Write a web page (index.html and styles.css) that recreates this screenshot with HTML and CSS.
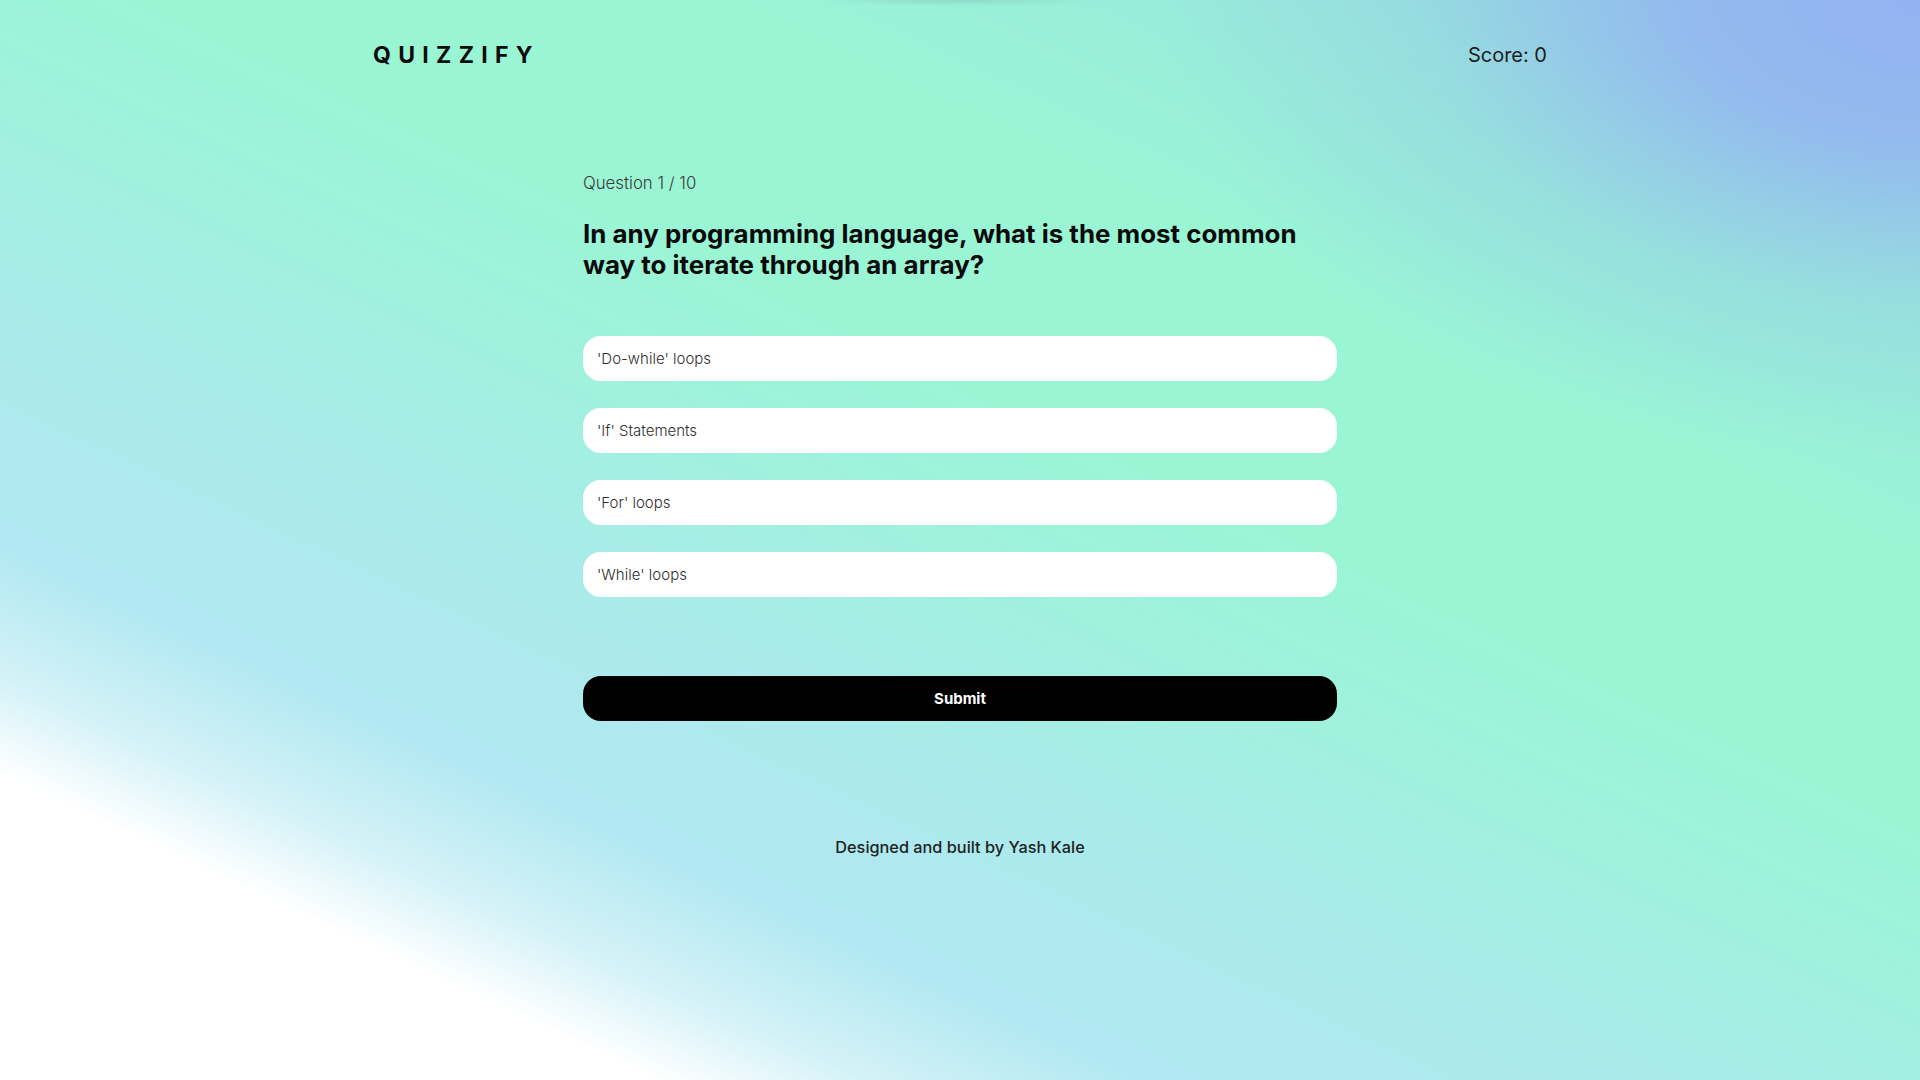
FILE: index.html
```html
<!DOCTYPE html>
<html lang="en">
<head>
<meta charset="utf-8">
<title>Quizzify</title>
<link rel="stylesheet" href="styles.css">
</head>
<body>
<div class="page">
  <header class="topbar">
    <div class="logo">QUIZZIFY</div>
    <div class="score">Score: 0</div>
  </header>
  <main class="quiz">
    <p class="counter">Question 1 / 10</p>
    <h1 class="question">In any programming language, what is the most common way to iterate through an array?</h1>
    <div class="options">
      <button class="option">'Do-while' loops</button>
      <button class="option">'If' Statements</button>
      <button class="option">'For' loops</button>
      <button class="option">'While' loops</button>
    </div>
    <button class="submit">Submit</button>
  </main>
  <footer class="credit">Designed and built by Yash Kale</footer>
</div>
</body>
</html>
```
FILE: styles.css
```css
* { box-sizing: border-box; }
html, body { margin: 0; padding: 0; }
body {
  min-height: 100vh;
  font-family: Inter, "Noto Sans", "Liberation Sans", sans-serif;
  color: #111;
  background:
    radial-gradient(ellipse 140px 6px at 49.8% 0, rgba(60,90,90,0.14), rgba(60,90,90,0) 100%),
    radial-gradient(ellipse 760px 460px at 100% 0, rgba(147,178,242,1) 0%, rgba(147,180,240,0.85) 30%, rgba(147,200,230,0.35) 65%, rgba(147,210,225,0) 100%),
    linear-gradient(25deg, #ffffff 0%, #ffffff 15.5%, #d3f2f7 20.5%, #b2e8f2 27%, #abeaec 37%, #a1f0df 48%, #9af5d5 58%, #9af5d5 72%, #98e8dc 86%, #93d0e6 100%);
  background-attachment: fixed;
}
.page {
  min-height: 100vh;
  display: flex;
  flex-direction: column;
}
.topbar {
  width: 1174px;
  margin: 0 auto;
  padding-top: 41px;
  display: flex;
  justify-content: space-between;
  align-items: center;
  height: 69px;
}
.logo {
  font-size: 23px;
  font-weight: 700;
  letter-spacing: 7.3px;
  line-height: 28px;
  color: #0b0b0b;
}
.score {
  font-size: 20px;
  font-weight: 400;
  line-height: 28px;
  color: #1d1d1d;
}
.quiz {
  width: 754px;
  margin: 104px auto 0;
  display: flex;
  flex-direction: column;
}
.counter {
  margin: 0;
  font-size: 16.8px;
  line-height: 20px;
  font-weight: 300;
  color: #3a3a3a;
}
.question {
  margin: 25px 0 0;
  font-size: 25.9px;
  line-height: 31px;
  font-weight: 700;
  color: #0a0a0a;
  padding-right: 20px;
}
.options {
  margin-top: 56px;
  display: flex;
  flex-direction: column;
  gap: 27px;
}
.option {
  height: 45px;
  border: none;
  border-radius: 18px;
  background: #fff;
  text-align: left;
  padding: 0 14px;
  font-family: inherit;
  font-size: 15px;
  font-weight: 300;
  color: #2e2e2e;
}
.submit {
  margin-top: 79px;
  height: 45px;
  border: none;
  border-radius: 18px;
  background: #000;
  color: #fff;
  font-family: inherit;
  font-size: 15px;
  font-weight: 700;
}
.credit {
  margin-top: 116px;
  text-align: center;
  font-size: 16.3px;
  line-height: 20px;
  font-weight: 500;
  color: #222;
}
```
